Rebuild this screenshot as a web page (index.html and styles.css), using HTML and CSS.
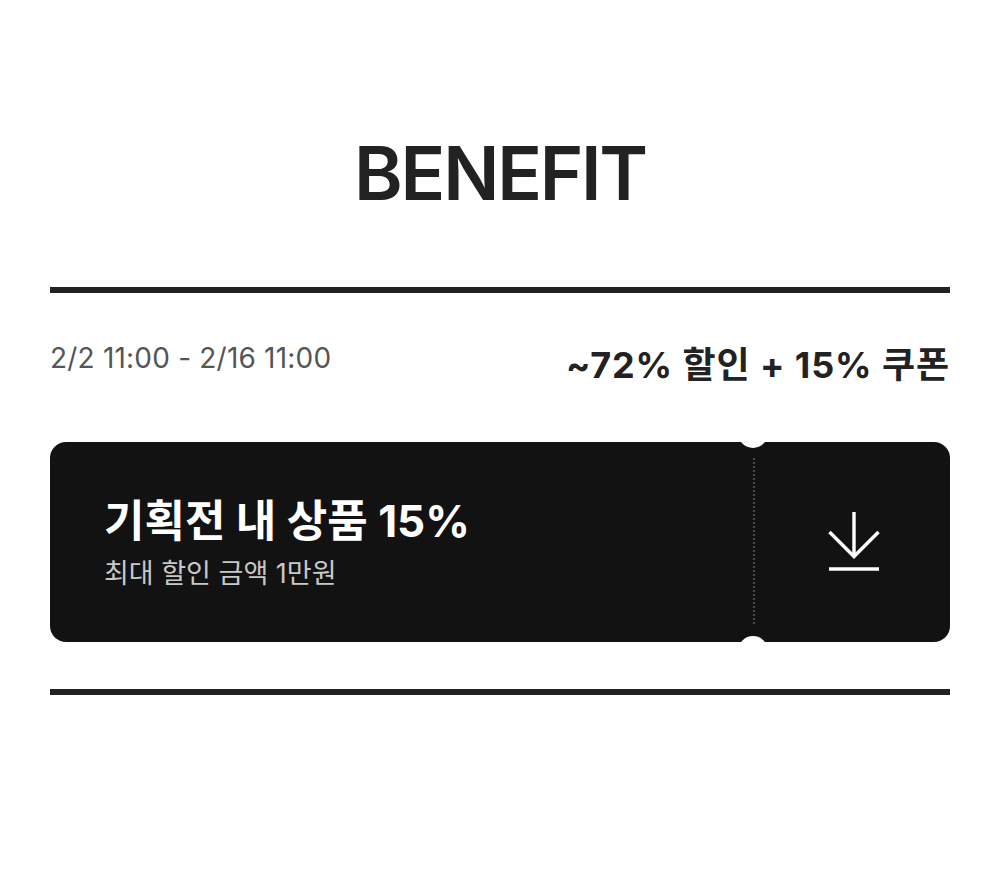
FILE: index.html
```
<!DOCTYPE html>
<html lang="ko">
<head>
<meta charset="utf-8">
<title>BENEFIT</title>
<link rel="stylesheet" href="styles.css">
</head>
<body>
<main class="page">
  <h1 class="title">BENEFIT</h1>
  <hr class="rule">
  <div class="meta">
    <span class="period">2/2 11:00 - 2/16 11:00</span>
    <span class="summary">~72% 할인 + 15% 쿠폰</span>
  </div>
  <div class="coupon">
    <div class="coupon-info">
      <div class="coupon-title">기획전 내 상품 15%</div>
      <div class="coupon-sub">최대 할인 금액 1만원</div>
    </div>
    <div class="divider"></div>
    <button class="coupon-download" type="button" aria-label="쿠폰 다운로드">
      <svg width="54" height="64" viewBox="0 0 54 64" fill="none" stroke="#fff" stroke-width="3.4">
        <path d="M27 2 V46"/>
        <path d="M2.5 22 L27 46.5 L51.5 22"/>
        <path d="M2 59 H52"/>
      </svg>
    </button>
    <span class="notch notch-top"></span>
    <span class="notch notch-bottom"></span>
  </div>
  <hr class="rule rule-bottom">
</main>
</body>
</html>
```
FILE: styles.css
```
* { box-sizing: border-box; }
html, body { margin: 0; padding: 0; background: #fff; }
body {
  font-family: Inter, "Noto Sans CJK KR", sans-serif;
  color: #222;
}
.page {
  padding: 136px 50px 0;
}
.title {
  margin: 0;
  font-size: 74px;
  line-height: 74px;
  font-weight: 600;
  letter-spacing: -2.2px;
  text-align: center;
  color: #222;
}
.rule {
  margin: 77px 0 0;
  height: 6px;
  border: 0;
  background: #222;
}
.rule-bottom {
  margin-top: 47px;
}
.meta {
  display: flex;
  justify-content: space-between;
  align-items: flex-start;
  padding-top: 51px;
  height: 149px;
}
.period {
  font-size: 28px;
  line-height: 28px;
  color: #555;
  letter-spacing: 0.2px;
}
.summary {
  margin-top: 3px;
  font-size: 36px;
  line-height: 36px;
  font-weight: 700;
  color: #222;
  letter-spacing: 0.9px;
}
.coupon {
  position: relative;
  display: flex;
  height: 200px;
  background: #121212;
  border-radius: 16px;
}
.coupon-info {
  flex: 1;
  display: flex;
  flex-direction: column;
  justify-content: flex-start;
  padding-left: 54px;
  padding-top: 54px;
}
.coupon-title {
  font-size: 44px;
  line-height: 50px;
  font-weight: 700;
  color: #fff;
  letter-spacing: 0;
}
.coupon-sub {
  margin-top: 12px;
  font-size: 27px;
  line-height: 32px;
  color: #c8c8c8;
}
.divider {
  width: 2px;
  margin: 16px 0;
  background: repeating-linear-gradient(to bottom, #4a4a4a 0 2px, transparent 2px 4px);
}
.coupon-download {
  width: 195px;
  display: flex;
  align-items: center;
  justify-content: center;
  background: none;
  border: 0;
  padding: 0 0 0 2px;
  cursor: pointer;
}
.notch {
  position: absolute;
  left: 688px;
  width: 30px;
  height: 30px;
  border-radius: 50%;
  background: #fff;
}
.notch-top { top: -24px; }
.notch-bottom { bottom: -24px; }
```
